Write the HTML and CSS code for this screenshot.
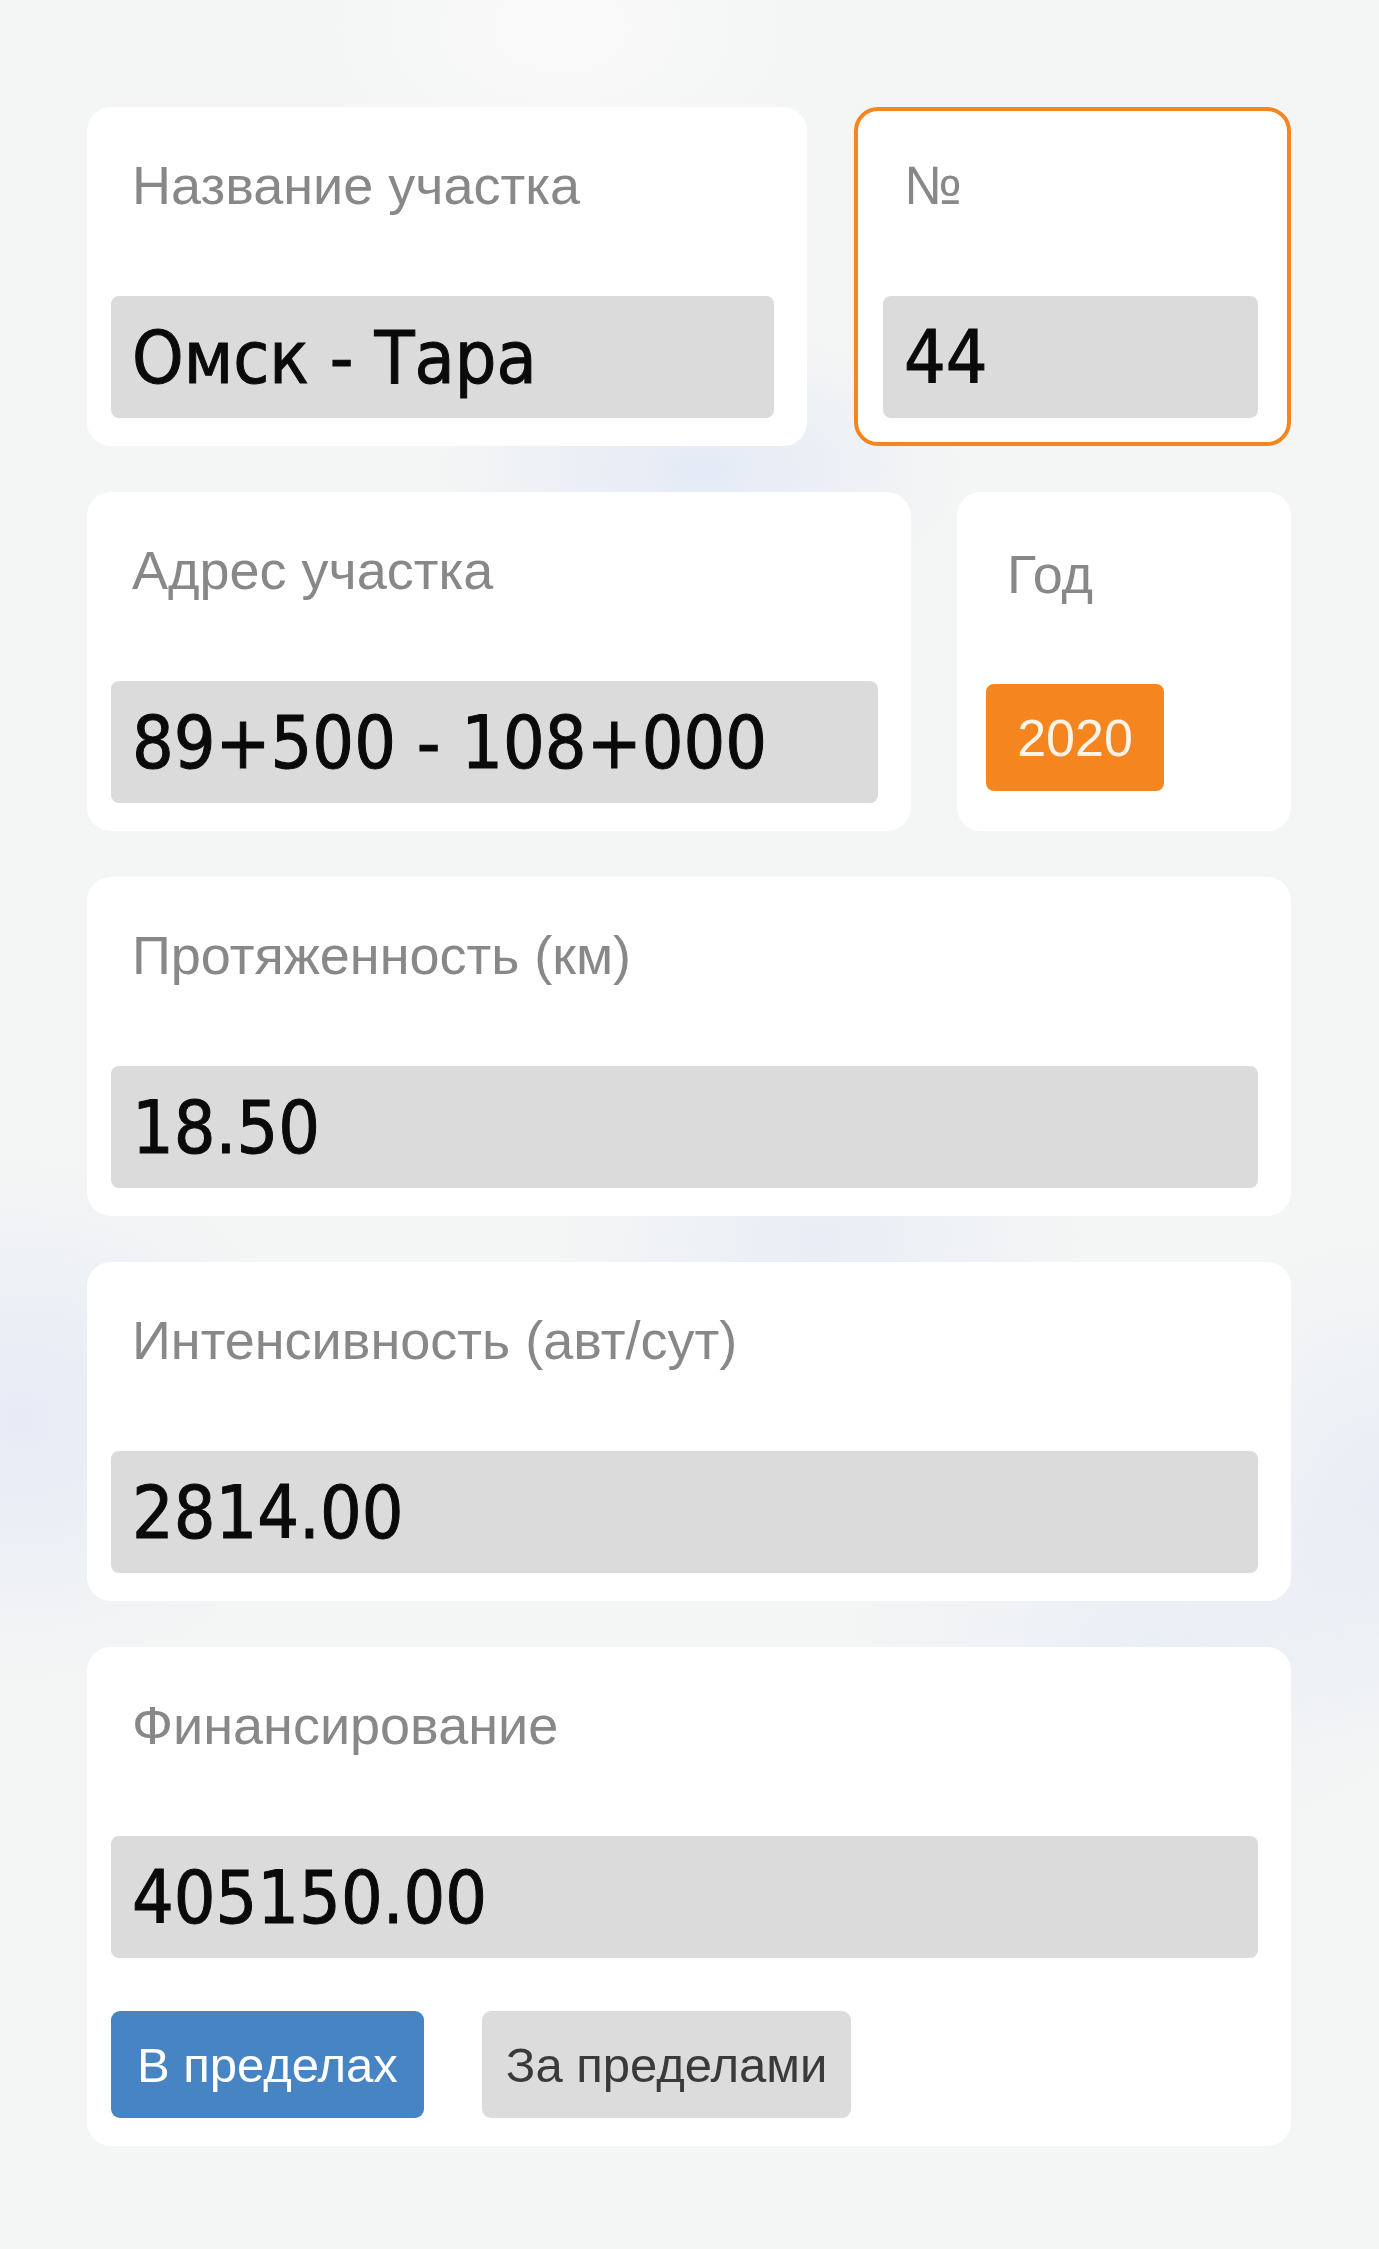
FILE: index.html
```html
<!DOCTYPE html>
<html lang="ru">
<head>
<meta charset="utf-8">
<title>Участок</title>
<link rel="stylesheet" href="styles.css">
</head>
<body>
<main class="page">
  <div class="row row-1">
    <section class="card">
      <div class="label">Название участка</div>
      <div class="field">Омск - Тара</div>
    </section>
    <section class="card card-small card-active">
      <div class="label">№</div>
      <div class="field">44</div>
    </section>
  </div>
  <div class="row row-2">
    <section class="card">
      <div class="label">Адрес участка</div>
      <div class="field">89+500 - 108+000</div>
    </section>
    <section class="card card-small card-year">
      <div class="label">Год</div>
      <div class="badge-row"><span class="badge">2020</span></div>
    </section>
  </div>
  <section class="card">
    <div class="label">Протяженность (км)</div>
    <div class="field">18.50</div>
  </section>
  <section class="card">
    <div class="label">Интенсивность (авт/сут)</div>
    <div class="field">2814.00</div>
  </section>
  <section class="card">
    <div class="label">Финансирование</div>
    <div class="field">405150.00</div>
    <div class="toggle">
      <button class="btn btn-on" type="button">В пределах</button>
      <button class="btn btn-off" type="button">За пределами</button>
    </div>
  </section>
</main>
</body>
</html>
```
FILE: styles.css
```css
html, body {
  margin: 0;
  padding: 0;
}

body {
  min-height: 2249px;
  background-color: #f4f5f5;
  background-image:
    radial-gradient(ellipse 260px 140px at 700px 470px, rgba(226, 233, 246, 0.9), rgba(226, 233, 246, 0) 100%),
    radial-gradient(ellipse 300px 260px at 20px 1420px, rgba(228, 234, 246, 0.9), rgba(228, 234, 246, 0) 100%),
    radial-gradient(ellipse 260px 200px at 820px 1240px, rgba(230, 236, 246, 0.8), rgba(230, 236, 246, 0) 100%),
    radial-gradient(ellipse 220px 260px at 1379px 1500px, rgba(230, 236, 246, 0.8), rgba(230, 236, 246, 0) 100%),
    radial-gradient(ellipse 300px 200px at 1150px 1640px, rgba(232, 237, 246, 0.8), rgba(232, 237, 246, 0) 100%),
    radial-gradient(ellipse 260px 160px at 560px 30px, rgba(250, 250, 250, 0.9), rgba(250, 250, 250, 0) 100%);
  font-family: "Liberation Sans", Arial, sans-serif;
}

.page {
  display: flex;
  flex-direction: column;
  gap: 46px;
  padding: 107px 88px 0 87px;
}

.row {
  display: grid;
  gap: 47px;
}

.row-1 {
  grid-template-columns: 1fr 437px;
}

.row-2 {
  grid-template-columns: 1fr 334px;
  gap: 46px;
}

.card {
  background: #ffffff;
  border-radius: 24px;
  padding: 46px 33px 28px 24px;
  display: flex;
  flex-direction: column;
}

.card-small {
  padding-left: 29px;
}

.card-active {
  border: 4px solid #f5861f;
  padding: 42px 29px 24px 25px;
}

.label {
  font-family: "Liberation Sans", Arial, sans-serif;
  font-size: 54px;
  line-height: 65px;
  height: 65px;
  color: #888888;
  padding-left: 21px;
  margin-bottom: 78px;
  white-space: nowrap;
}

.field {
  height: 122px;
  box-sizing: border-box;
  background: #dbdbdb;
  border-radius: 8px;
  padding-left: 21px;
  display: flex;
  align-items: center;
  font-family: "DejaVu Sans Condensed", "DejaVu Sans", sans-serif;
  font-stretch: condensed;
  font-size: 73px;
  color: #0a0a0a;
  -webkit-text-stroke: 1px #0a0a0a;
  white-space: nowrap;
}

.card-year {
  padding-top: 50px;
}

.card-year .label {
  margin-bottom: 77px;
}

.badge-row {
  display: flex;
}

.badge {
  display: inline-flex;
  align-items: center;
  justify-content: center;
  height: 107px;
  width: 178px;
  box-sizing: border-box;
  background: #f5861f;
  color: #fdf3e8;
  border-radius: 8px;
  font-family: "Liberation Sans", Arial, sans-serif;
  font-size: 52px;
}

.toggle {
  display: flex;
  gap: 58px;
  margin-top: 53px;
}

.btn {
  height: 107px;
  border: none;
  border-radius: 9px;
  padding: 0 26px;
  font-family: "Liberation Sans", Arial, sans-serif;
  font-size: 49px;
  white-space: nowrap;
  cursor: pointer;
}

.btn-on {
  background: #4784c4;
  color: #ffffff;
}

.btn-off {
  background: #dcdcdc;
  color: #3a3a3a;
  padding: 0 24px;
}
```
